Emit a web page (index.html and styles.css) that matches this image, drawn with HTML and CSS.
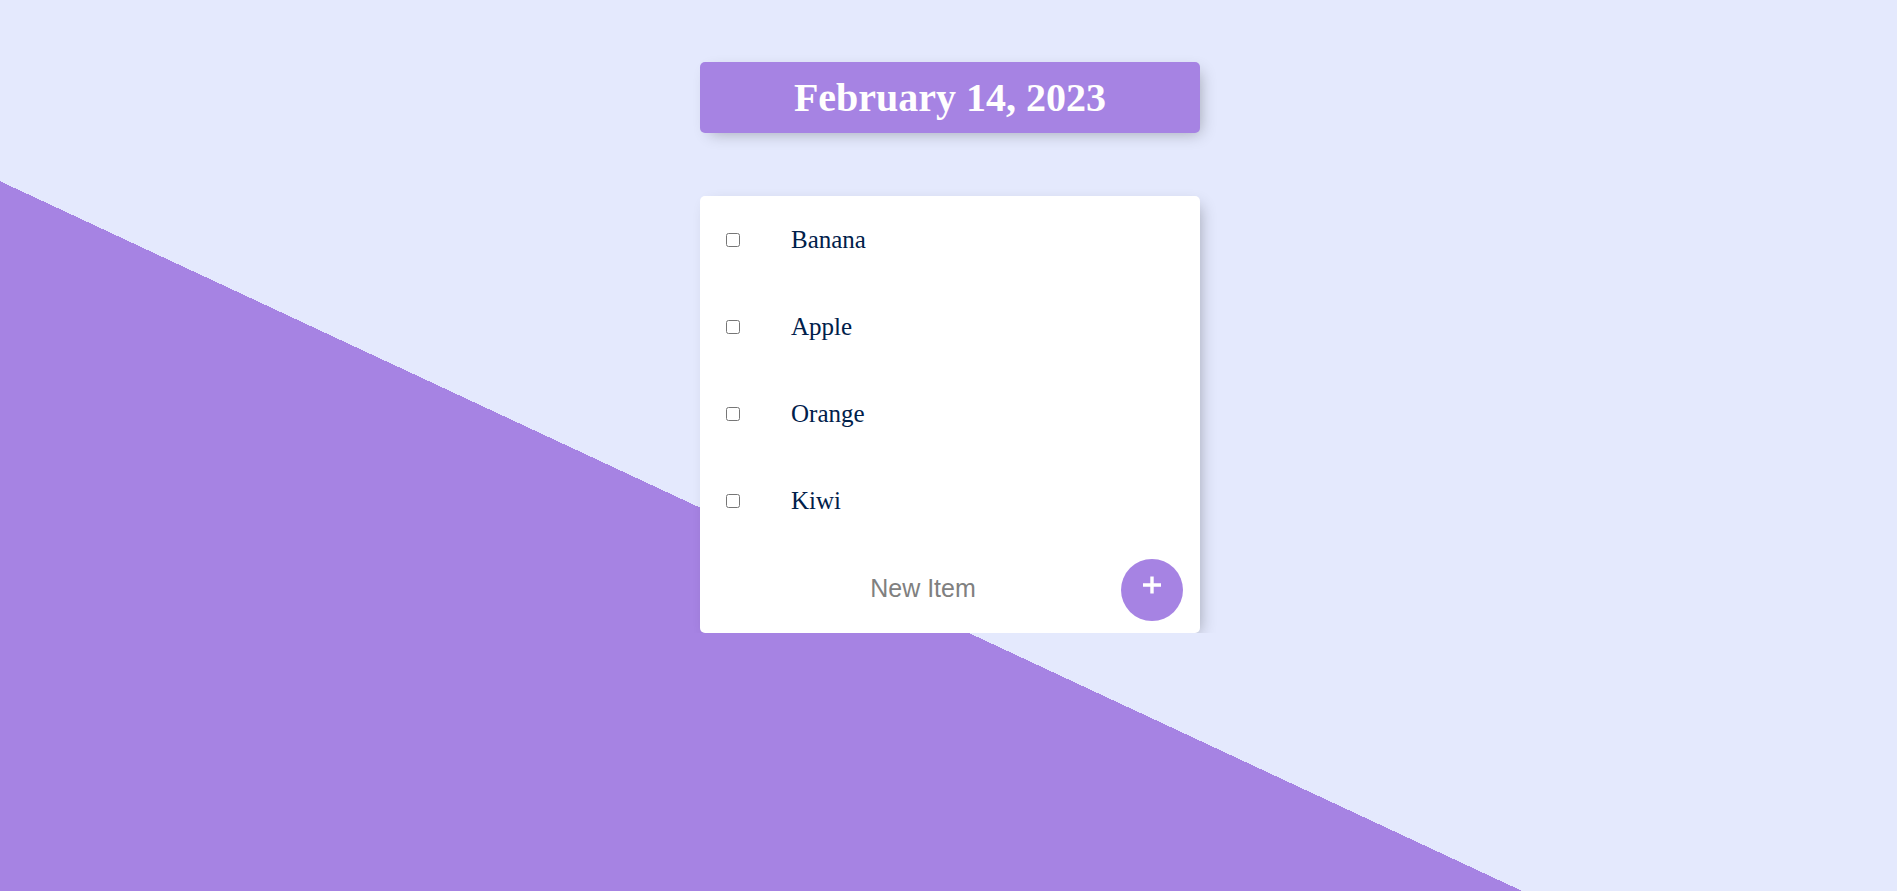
FILE: index.html
```html
<!DOCTYPE html>
<html lang="en">
<head>
<meta charset="utf-8">
<title>To Do List</title>
<link rel="stylesheet" href="styles.css">
</head>
<body>
<main class="page">
  <div class="box heading">
    <h1 class="title">February 14, 2023</h1>
  </div>
  <div class="box list">
    <div class="item">
      <input class="check" type="checkbox">
      <p class="label">Banana</p>
    </div>
    <div class="item">
      <input class="check" type="checkbox">
      <p class="label">Apple</p>
    </div>
    <div class="item">
      <input class="check" type="checkbox">
      <p class="label">Orange</p>
    </div>
    <div class="item">
      <input class="check" type="checkbox">
      <p class="label">Kiwi</p>
    </div>
    <form class="add-form">
      <input class="new-item" type="text" name="newItem" placeholder="New Item" autocomplete="off">
      <button class="add-btn" type="button" aria-label="Add">
        <svg class="plus" width="20" height="20" viewBox="0 0 20 20"><path d="M10 1.5V18.5M1 10H19" stroke="#ffffff" stroke-width="3.4" fill="none"/></svg>
      </button>
    </form>
  </div>
</main>
</body>
</html>
```

FILE: styles.css
```css
html {
  background-color: #E4E9FD;
  background-image: linear-gradient(25deg, #A683E3 50%, #E4E9FD 50%);
  background-size: 1897px 1247px;
  background-repeat: no-repeat;
  min-height: 100%;
}

body {
  margin: 0;
  font-family: "Liberation Serif", "Times New Roman", serif;
}

.page {
  display: flex;
  flex-direction: column;
  align-items: center;
  padding: 62px 0 0 3px;
  gap: 63px;
}

.box {
  width: 500px;
  background: #ffffff;
  border-radius: 5px;
  box-shadow: 5px 5px 15px -5px rgba(0, 0, 0, 0.3);
}

.heading {
  background-color: #A683E3;
  text-align: center;
}

.title {
  margin: 0;
  padding: 13px 10px;
  font-size: 40px;
  line-height: 45px;
  font-weight: bold;
  color: #fffefe;
}

.item {
  display: flex;
  align-items: center;
  height: 87px;
}

.check {
  margin: 0 0 0 26px;
  width: 14px;
  height: 14px;
  flex: none;
}

.label {
  margin: 0 0 0 51px;
  font-size: 25px;
  color: #00204a;
}

.add-form {
  display: flex;
  align-items: center;
  height: 89px;
  padding: 0 17px 0 25px;
}

.new-item {
  flex: 1;
  min-width: 0;
  border: none;
  outline: none;
  background: transparent;
  text-align: center;
  font-family: "Liberation Sans", Arial, sans-serif;
  font-size: 25px;
  height: 60px;
  padding: 0;
  color: #00204a;
}

.new-item::placeholder {
  color: #808080;
  opacity: 1;
}

.add-btn {
  flex: none;
  width: 62px;
  height: 62px;
  border-radius: 50%;
  border: 0;
  background-color: #A683E3;
  padding: 0 0 10px 0;
  display: flex;
  align-items: center;
  justify-content: center;
  margin-top: 2px;
}

.plus {
  display: block;
}
```
